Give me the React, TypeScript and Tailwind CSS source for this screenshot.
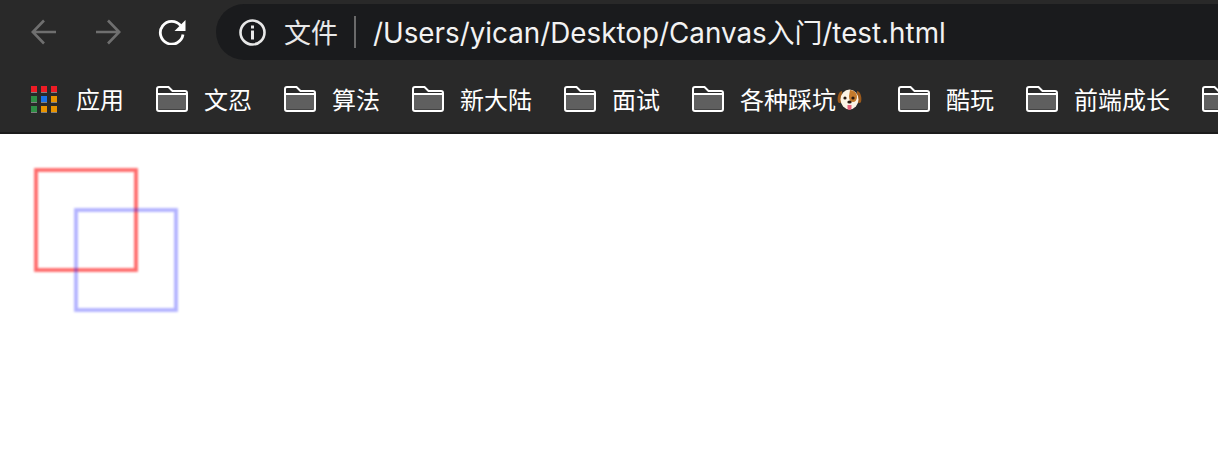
import React from 'react';

const cjk = "font-['Inter','Noto_Sans_CJK_SC',sans-serif]";

const bookmarks = [
	{ name: '文忍' },
	{ name: '算法' },
	{ name: '新大陆' },
	{ name: '面试' },
	{ name: '各种踩坑', dog: true },
	{ name: '酷玩' },
	{ name: '前端成长' },
	{ name: '' },
];

const appColors = [
	'bg-[#ee1c25]', 'bg-[#ee1c25]', 'bg-[#ee1c25]',
	'bg-[#2f8f46]', 'bg-[#1a73e8]', 'bg-[#e89300]',
	'bg-[#2f8f46]', 'bg-[#e89300]', 'bg-[#e89300]',
];

const Folder = () => (
	<svg width="32" height="26" viewBox="0 0 32 26" className="shrink-0">
		<path d="M2 8.5h28v15H2z" fill="#5f5f5f" />
		<path
			d="M3 1h9.5l4 4H29a2 2 0 0 1 2 2v16a2 2 0 0 1-2 2H3a2 2 0 0 1-2-2V3a2 2 0 0 1 2-2z"
			fill="none"
			stroke="#fff"
			strokeWidth="2"
		/>
		<path d="M2 8h28" stroke="#fff" strokeWidth="2" />
	</svg>
);

const Dog = () => (
	<svg width="25" height="25" viewBox="0 0 25 25" className="shrink-0">
		<path d="M5 4C1 5 0 11 1 15c1 2 3 1 4-1z" fill="#9c5a1c" />
		<path d="M20 4c4 1 5 7 4 11-1 2-3 1-4-1z" fill="#9c5a1c" />
		<ellipse cx="12.5" cy="12.5" rx="9" ry="10" fill="#fbf3e6" />
		<path d="M13 3c4 0 7 3 7 7 0 3-2 5-4 5-3 0-4-3-4-6z" fill="#c47a2c" />
		<circle cx="8" cy="11" r="1.6" fill="#2a1a10" />
		<circle cx="16" cy="11" r="1.6" fill="#2a1a10" />
		<ellipse cx="12.5" cy="15" rx="2.2" ry="1.6" fill="#2a1a10" />
		<path d="M10.5 18h4v3a2 2 0 0 1-4 0z" fill="#e8607a" />
	</svg>
);

export default function App() {
	return (
		<div className={`h-[462px] w-[1218px] overflow-hidden bg-white ${cjk}`}>
			{/* Toolbar */}
			<div className="flex h-[60px] items-start bg-[#292929] pl-[31px] pt-1">
				<svg width="26" height="26" viewBox="0 0 26 26" fill="none" stroke="#6f6f6f" strokeWidth="2.6" className="mt-[15px]">
					<path d="M25 13H2M13 1.5 1.8 13 13 24.5" />
				</svg>
				<svg width="26" height="26" viewBox="0 0 26 26" fill="none" stroke="#6f6f6f" strokeWidth="2.6" className="ml-[38px] mt-[15px]">
					<path d="M1 13h23M13 1.5 24.2 13 13 24.5" />
				</svg>
				<svg width="28" height="26" viewBox="0 0 28 26" fill="none" className="ml-[37px] mt-[15px]">
					<path d="M22.6 6.5A11.4 11.4 0 1 0 25 15.5" stroke="#fff" strokeWidth="2.8" />
					<path d="M27.5 1v11h-11z" fill="#fff" />
				</svg>
				{/* Address bar */}
				<div className="ml-[30px] flex h-14 flex-1 items-center rounded-l-[28px] bg-[#1a1b1d] pl-[23px] text-white">
					<svg width="27" height="27" viewBox="0 0 27 27" fill="none" className="shrink-0">
						<circle cx="13.5" cy="13.5" r="12" stroke="#e8e8e8" strokeWidth="2.6" />
						<rect x="12" y="11.5" width="3" height="9" fill="#e8e8e8" />
						<rect x="12" y="6.5" width="3" height="3" fill="#e8e8e8" />
					</svg>
					<span className="ml-[18px] pt-0.5 text-[27px] leading-none text-[#e8e8e8]">文件</span>
					<span className="ml-[16px] h-8 w-0.5 bg-[#6a6a6a]" />
					<span className="ml-[17px] whitespace-nowrap pt-[3px] text-[27.8px] leading-none text-[#f2f2f2]">
						/Users/yican/Desktop/Canvas入门/test.html
					</span>
				</div>
			</div>

			{/* Bookmarks bar */}
			<div className="flex h-[74px] items-center overflow-hidden border-b-2 border-[#1c1c1c] bg-[#292929] pl-[31px] pt-1.5 text-2xl leading-none text-white">
				<div className="grid w-[26px] shrink-0 grid-cols-3 gap-x-1 gap-y-[3px]">
					{appColors.map((color, i) => (
						<div key={i} className={`h-[7px] w-1.5 border-b border-[#808080] ${color}`} />
					))}
				</div>
				<span className="ml-[19px] mr-[32px] shrink-0 pt-[3px]">应用</span>
				{bookmarks.map((b, i) => (
					<div key={i} className="mr-[31px] flex shrink-0 items-center">
						<Folder />
						<span className="ml-4 mr-px whitespace-nowrap pt-[3px]">{b.name}</span>
						{b.dog && (
							<span className="mr-[5px]">
								<Dog />
							</span>
						)}
					</div>
				))}
			</div>

			{/* Canvas contents */}
			<svg width="200" height="200" viewBox="0 0 200 200" fill="none" strokeWidth="3.8" className="mt-[26px] blur-[0.8px]">
				<rect x="36" y="10" width="100" height="100" stroke="#ff0000" strokeOpacity="0.58" />
				<rect x="76" y="50" width="100" height="100" stroke="#0000ff" strokeOpacity="0.3" />
			</svg>
		</div>
	);
}
